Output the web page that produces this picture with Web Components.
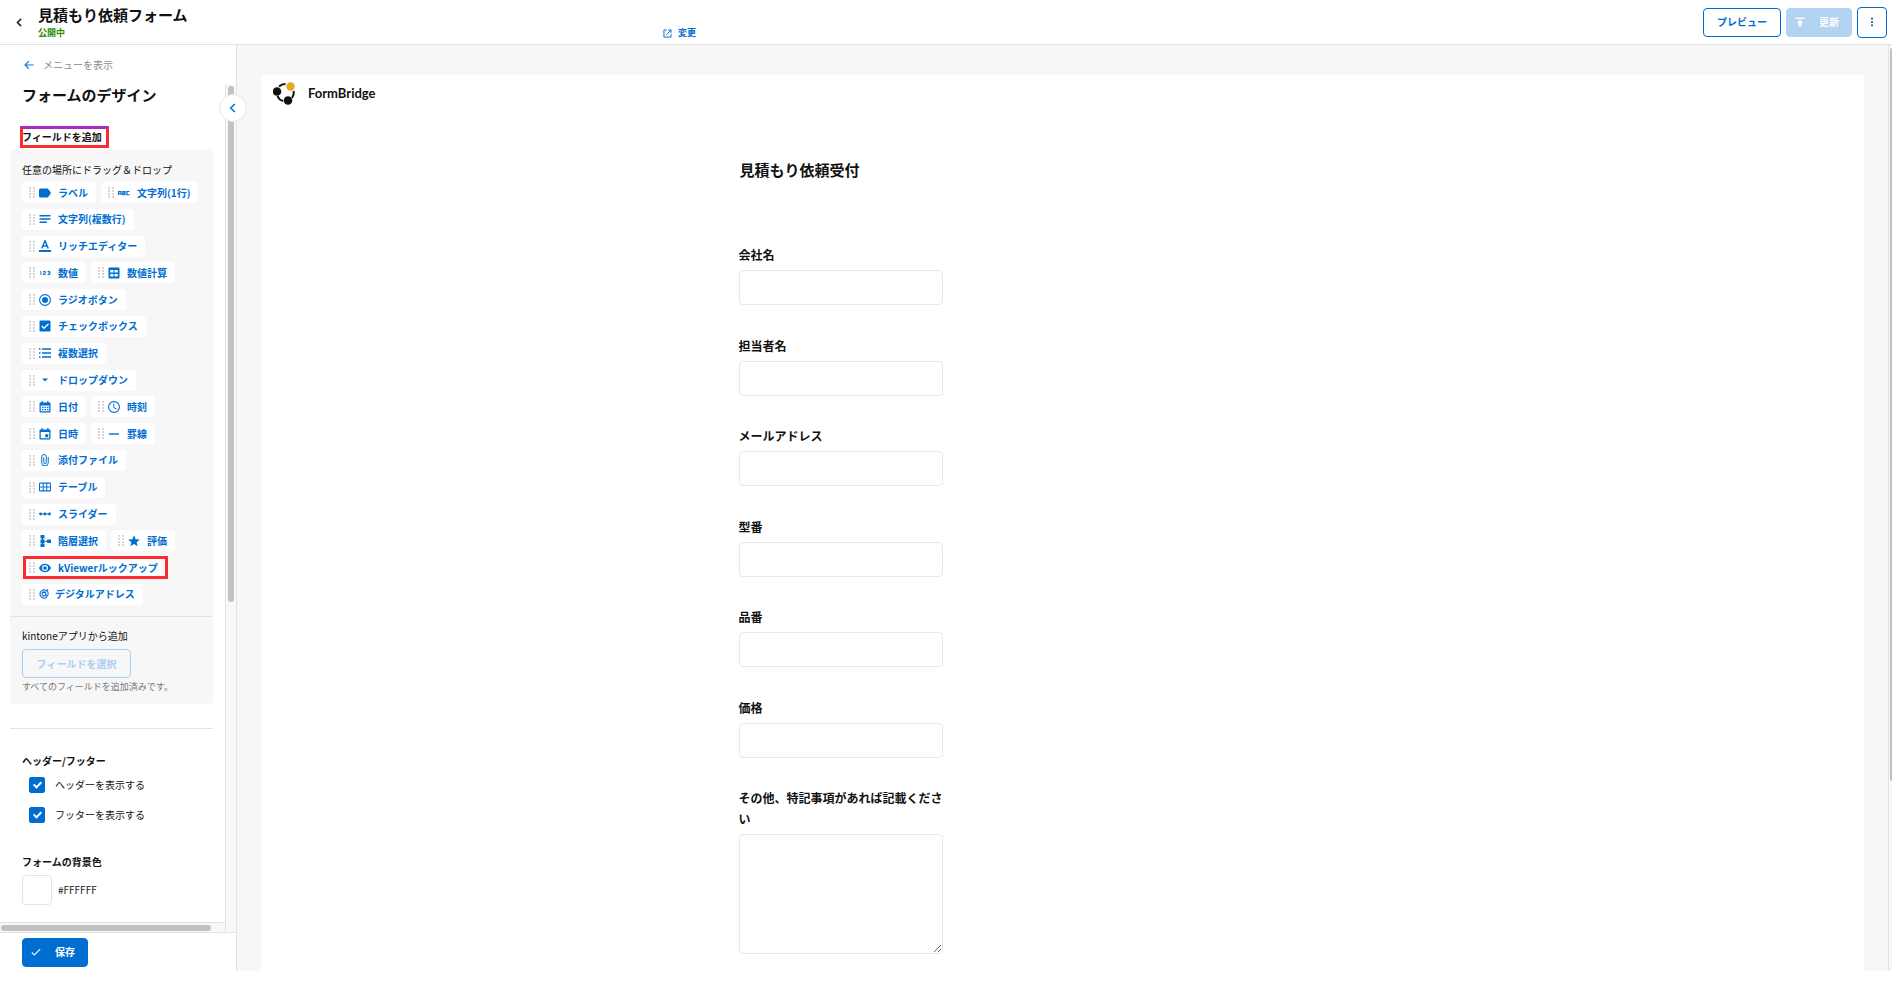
<!DOCTYPE html>
<html lang="ja">
<head>
<meta charset="utf-8">
<title>見積もり依頼フォーム</title>
<style>
  html, body { height: 100%; }
  body { margin: 0; background: #fff; color: #111; font-family: "Noto Sans CJK JP", sans-serif; font-size: 10px; line-height: 16px; }
</style>
</head>
<body>
<form-builder></form-builder>
<script>
const ICONS = {
  label: '<path fill="currentColor" d="M3 3h13c1 0 2 .4 2.500 1.200L24 12l-5.500 7.800C18 20.600 17 21 16 21H3c-1.600 0-3-1.300-3-3V6c0-1.700 1.400-3 3-3z"/>',
  abc: '<path fill="none" stroke="currentColor" stroke-width="2.400" d="M1 16V9h5v7M1 13h5M9.500 9H14v6.500H9.500zM9.500 12H14M23 9h-5v6.500h5"/>',
  lines: '<path fill="none" stroke="currentColor" stroke-width="3" d="M1 5.500h22M1 12h22M1 18.500h15"/>',
  rich: '<path fill="none" stroke="currentColor" stroke-width="2.800" d="M5.500 17L12 1.500 18.500 17M8 12h8"/><path fill="currentColor" d="M0 20h24v4H0z"/>',
  num: '<path fill="none" stroke="currentColor" stroke-width="1.800" d="M2 9.500h2V16M8 9h5v3H9v3.200h4.500M17 9h5v6h-5M18 12h4"/>',
  calc: '<path fill="currentColor" fill-rule="evenodd" d="M3 1h18a2 2 0 0 1 2 2v18a2 2 0 0 1-2 2H3a2 2 0 0 1-2-2V3a2 2 0 0 1 2-2zm1.500 5v5H11V6zM13 6v5h6.500V6zM4.500 14v5H11v-5zM13 14v5h6.500v-5z"/>',
  radio: '<circle cx="12" cy="12" r="10.800" fill="none" stroke="currentColor" stroke-width="2.200"/><circle cx="12" cy="12" r="6" fill="currentColor"/>',
  check: '<rect x="1" y="1" width="22" height="22" rx="2.500" fill="currentColor"/><path fill="none" stroke="#fff" stroke-width="2.600" d="M5.500 12l4.500 4.500 9-9"/>',
  list: '<path stroke="currentColor" stroke-width="2.600" d="M0 4h3M6 4h18M0 12h3M6 12h18M0 20h3M6 20h18"/>',
  caret: '<path fill="currentColor" d="M6 9h12l-6 6z"/>',
  date: '<path fill="currentColor" fill-rule="evenodd" d="M5 0h2.500v3h9V0H19v3h2a2 2 0 0 1 2 2v16a2 2 0 0 1-2 2H3a2 2 0 0 1-2-2V5a2 2 0 0 1 2-2h2zM3.500 9v11.500h17V9z"/><path stroke="currentColor" stroke-width="2.500" stroke-dasharray="3 2" d="M6 12.500h13M6 17h13"/>',
  clock: '<circle cx="12" cy="12" r="10.800" fill="none" stroke="currentColor" stroke-width="2.200"/><path fill="none" stroke="currentColor" stroke-width="2" d="M11.500 5.500V13l5.500 3"/>',
  datetime: '<path fill="currentColor" fill-rule="evenodd" d="M5 0h2.500v3h9V0H19v3h2a2 2 0 0 1 2 2v16a2 2 0 0 1-2 2H3a2 2 0 0 1-2-2V5a2 2 0 0 1 2-2h2zM3.500 8v12.500h17V8zM12.500 12.500h6v6h-6z"/>',
  rule: '<path stroke="currentColor" stroke-width="2.800" d="M2 12h20"/>',
  clip: '<path fill="none" stroke="currentColor" stroke-width="2" d="M18.500 6v11.500a6.500 6.500 0 0 1-13 0V5.500a4.500 4.500 0 0 1 9 0V17a2.500 2.500 0 0 1-5 0V7"/>',
  table: '<rect x="0" y="3" width="24" height="18" rx="2" fill="currentColor"/><path fill="#fff" d="M2 5.500h5.500v5.500H2zM9.500 5.500h5v5.500h-5zM16.500 5.500H22v5.500h-5.500zM2 13h5.500v5.500H2zM9.500 13h5v5.500h-5zM16.500 13H22v5.500h-5.500z"/>',
  slider: '<path stroke="currentColor" stroke-width="2" d="M2 12h20"/><g fill="currentColor"><circle cx="3" cy="12" r="2.800"/><circle cx="12" cy="12" r="2.800"/><circle cx="21" cy="12" r="2.800"/></g>',
  tree: '<path fill="currentColor" d="M3 0h8v7H3zM3 9h8v7H3zM3 17h8v7H3zM16 9h8v7h-8z"/><path stroke="currentColor" stroke-width="2" d="M7 2v20M8 12.500h10"/>',
  star: '<path fill="currentColor" d="M12 0.500l3.200 7.800 8.400.6-6.400 5.500 2 8.300L12 18.200l-7.200 4.500 2-8.300L.4 8.900l8.400-.6z"/>',
  eye: '<path fill="currentColor" fill-rule="evenodd" d="M12 3.500C6.500 3.500 2 7 0 12c2 5 6.500 8.500 12 8.500S22 17 24 12c-2-5-6.500-8.500-12-8.500zM12 18a6 6 0 1 1 0-12 6 6 0 0 1 0 12z"/><circle cx="12" cy="12" r="3.700" fill="currentColor"/>',
  at: '<g fill="none" stroke="currentColor" stroke-width="2.600"><path d="M19 19.500A10 10 0 1 1 21.500 8c1 5-.5 9-3 9s-2.500-3-2-6"/><circle cx="11.500" cy="12.500" r="4.500"/><path d="M8 7h9M19 1l3 3"/></g>',
  chevron: '<path fill="none" stroke="currentColor" stroke-width="3.400" d="M15.500 4l-8 8 8 8"/>',
  back: '<path fill="none" stroke="currentColor" stroke-width="2.800" d="M23 12H3M11.500 3L2.500 12l9 9"/>',
  open: '<path fill="none" stroke="currentColor" stroke-width="2.600" d="M10 2.500H2.500v19h19V14M14 2.500h7.500V10M21 3L9 15"/>',
  upload: '<path fill="currentColor" d="M1 2h22v2.500H1zM12 6l8 8h-4.500v8h-7v-8H4z"/>',
  dots: '<g fill="currentColor"><circle cx="12" cy="4" r="2.700"/><circle cx="12" cy="12" r="2.700"/><circle cx="12" cy="20" r="2.700"/></g>',
  tick: '<path fill="none" stroke="currentColor" stroke-width="2.600" d="M2 13l6 6L22 5"/>'
};

const BUTTON = `
  button { font: inherit; font-weight: 700; box-sizing: border-box; margin: 0; display: inline-flex; align-items: center; justify-content: center; border: 1px solid #006dd0; border-radius: 4px; background: #fff; color: #006dd0; height: 29px; padding: 0; }
`;

function define(name, render) {
  customElements.define(name, class extends HTMLElement {
    connectedCallback() {
      if (this.shadowRoot) return;
      this.attachShadow({ mode: 'open' }).innerHTML = render(this);
    }
  });
}

define('ui-icon', el => `
  <style>:host { display: block; flex: none; width: var(--size, 12px); height: var(--size, 12px); } svg { display: block; width: 100%; height: 100%; }</style>
  <svg viewBox="0 0 24 24" aria-hidden="true">${ICONS[el.getAttribute('name')]}</svg>`);

define('field-chip', el => `
  <style>
    :host { display: block; }
    button { font: inherit; font-weight: 700; position: relative; display: flex; align-items: center; height: 21px; margin: 0; padding: 0 8px 0 7px; border: 0; border-radius: 4px; background: #fff; color: #006dd0; cursor: grab; white-space: nowrap; }
    svg { width: 6px; height: 11px; margin-right: 4px; }
    ui-icon { margin-right: 7px; }
    :host([tight]) ui-icon { --size: 10px; margin-right: 6px; }
    :host([marked]) button::after { content: ""; position: absolute; inset: -1px -2px -1px 1px; border: 3px solid #fb2c30; }
  </style>
  <button type="button">
    <svg viewBox="0 0 6 11" fill="#c4c4c4" aria-hidden="true"><circle cx="1" cy="1" r="0.900"/><circle cx="5" cy="1" r="0.900"/><circle cx="1" cy="4" r="0.900"/><circle cx="5" cy="4" r="0.900"/><circle cx="1" cy="7" r="0.900"/><circle cx="5" cy="7" r="0.900"/><circle cx="1" cy="10" r="0.900"/><circle cx="5" cy="10" r="0.900"/></svg>
    <ui-icon name="${el.getAttribute('icon')}"></ui-icon><slot></slot>
  </button>`);

define('check-option', () => `
  <style>
    :host { display: block; }
    label { display: flex; align-items: center; gap: 10px; height: 30px; padding-left: 7px; color: #111; }
    input { appearance: none; width: 16px; height: 16px; margin: 0; border-radius: 2px; background: #fff; border: 1px solid #006dd0; display: grid; place-items: center; }
    input:checked { background: #006dd0; }
    input:checked::after { content: ""; width: 3px; height: 6px; border: solid #fff; border-width: 0 2px 2px 0; transform: translateY(-1px) rotate(45deg); }
  </style>
  <label><input type="checkbox" checked><span><slot></slot></span></label>`);

define('form-field', el => `
  <style>
    :host { display: block; width: 204px; }
    label { display: block; margin-bottom: 5px; font-size: 12px; font-weight: 700; line-height: 21px; }
    input, textarea { display: block; box-sizing: border-box; width: 100%; height: 35px; margin: 0; padding: 4px 8px; border: 1px solid #e8e8e8; border-radius: 4px; background: #fff; font: inherit; outline: 0; }
    textarea { height: 120px; resize: vertical; }
  </style>
  <label for="control"><slot></slot></label>
  ${el.hasAttribute('multiline') ? '<textarea id="control"></textarea>' : '<input id="control" type="text">'}`);

define('app-header', () => `
  <style>${BUTTON}
    :host { display: flex; align-items: center; box-sizing: border-box; height: 45px; padding-right: 5px; border-bottom: 1px solid #e3e3e3; background: #fff; }
    .back { width: 38px; height: 44px; border: 0; background: none; color: #222; }
    .back ui-icon { --size: 11px; }
    .titles { display: flex; flex-direction: column; width: 625px; }
    h1 { margin: 0; font-size: 15px; line-height: 21px; }
    .state { font-size: 9px; line-height: 16px; font-weight: 700; color: #2c8a00; }
    a { display: flex; align-items: center; gap: 6px; align-self: flex-end; margin-bottom: 4px; font-size: 9px; line-height: 14px; font-weight: 700; color: #006dd0; text-decoration: none; }
    a ui-icon { --size: 9px; }
    .actions { display: flex; align-items: center; gap: 5px; margin-left: auto; }
    .preview { width: 78px; }
    .update { width: 66px; gap: 14px; padding-right: 4px; border-color: #b2d3f1; background: #b2d3f1; color: #fff; }
    .update ui-icon { --size: 10px; }
    .more { width: 30px; height: 31px; }
    .more ui-icon { --size: 10px; }
  </style>
  <button class="back" type="button" aria-label="戻る"><ui-icon name="chevron"></ui-icon></button>
  <div class="titles"><h1>見積もり依頼フォーム</h1><span class="state">公開中</span></div>
  <a href="#"><ui-icon name="open"></ui-icon>変更</a>
  <div class="actions">
    <button class="preview" type="button">プレビュー</button>
    <button class="update" type="button" disabled><ui-icon name="upload"></ui-icon>更新</button>
    <button class="more" type="button" aria-label="その他"><ui-icon name="dots"></ui-icon></button>
  </div>`);

const ROWS = [
  [['label', 'ラベル'], ['abc', '文字列(1行)']],
  [['lines', '文字列(複数行)']],
  [['rich', 'リッチエディター']],
  [['num', '数値'], ['calc', '数値計算']],
  [['radio', 'ラジオボタン']],
  [['check', 'チェックボックス']],
  [['list', '複数選択']],
  [['caret', 'ドロップダウン']],
  [['date', '日付'], ['clock', '時刻']],
  [['datetime', '日時'], ['rule', '罫線']],
  [['clip', '添付ファイル']],
  [['table', 'テーブル']],
  [['slider', 'スライダー']],
  [['tree', '階層選択'], ['star', '評価']],
  [['eye', 'kViewerルックアップ', 'marked']],
  [['at', 'デジタルアドレス', 'tight']]
];

define('design-sidebar', () => `
  <style>${BUTTON}
    :host { position: relative; display: flex; flex-direction: column; box-sizing: border-box; width: 237px; border-right: 1px solid #e3e3e3; background: #fff; }
    .menu { display: flex; align-items: center; gap: 9px; height: 39px; padding-left: 24px; color: #8c8c8c; text-decoration: none; }
    .menu ui-icon { --size: 10px; color: #0a7be0; }
    .scroller { flex: 1; min-height: 0; display: grid; grid-template-columns: 1fr 11px; grid-template-rows: minmax(0, 1fr) 10px; }
    .content { overflow: hidden; padding: 0 12px 0 10px; }
    .vbar { grid-row: 1 / 3; grid-column: 2; border-left: 1px solid #e3e3e3; background: #f8f8f8; padding: 2px 2px 0; }
    .vbar i { display: block; height: 516px; border-radius: 3px; background: #c1c1c1; }
    .hbar { border-top: 1px solid #e3e3e3; background: #f8f8f8; padding: 2px 14px 0 1px; }
    .hbar i { display: block; height: 6px; border-radius: 3px; background: #c1c1c1; }
    h2 { margin: 0 0 0 12px; font-size: 15px; line-height: 22px; }
    h3 { margin: 0 0 0 12px; font-size: 10px; line-height: 16px; }
    .add { position: relative; width: max-content; margin-top: 23px; margin-bottom: 5px; }
    .add::after { content: ""; position: absolute; inset: -3px -7px -3px -2px; border: 3px solid #fb2c30; border-top-color: #a82bc8; }
    .panel { border-radius: 4px; background: #f7f7f7; }
    .panel section { padding: 12px 12px 11px; }
    .panel section + section { border-top: 1px solid #e3e3e3; padding: 11px 12px 9px; }
    p { margin: 0; color: #111; line-height: 16px; }
    .chips { display: flex; flex-direction: column; justify-content: space-between; height: 423px; margin-top: 4px; }
    .row { display: flex; gap: 5px; }
    .pick { display: flex; width: 109px; height: 29px; margin: 5px 0 1px; border-color: #a9d0f3; background: none; color: #a9d0f3; }
    .note { font-size: 9px; color: #777; }
    hr { margin: 24px 0; border: 0; border-top: 1px solid #e3e3e3; }
    .options { margin: 1px 12px 24px; }
    .color { display: flex; align-items: center; gap: 6px; margin: 5px 12px 0; color: #222; }
    .color button { width: 30px; height: 30px; border-color: #e3e3e3; }
    footer { display: flex; align-items: center; box-sizing: border-box; height: 39px; padding: 0 22px; border-top: 1px solid #e3e3e3; }
    .save { width: 66px; gap: 14px; padding-right: 4px; background: #006dd0; color: #fff; }
    .collapse { position: absolute; top: 49px; right: -11px; width: 28px; height: 28px; border: 1px solid #e8e8e8; border-radius: 50%; color: #0a7be0; }
    .save ui-icon { --size: 10px; }
  </style>
  <a class="menu" href="#"><ui-icon name="back"></ui-icon>メニューを表示</a>
  <div class="scroller">
    <div class="content">
      <h2>フォームのデザイン</h2>
      <h3 class="add">フィールドを追加</h3>
      <div class="panel">
        <section>
          <p>任意の場所にドラッグ＆ドロップ</p>
          <div class="chips">${ROWS.map(row => `<div class="row">${row.map(([icon, text, flag = '']) =>
            `<field-chip icon="${icon}" ${flag}>${text}</field-chip>`).join('')}</div>`).join('')}</div>
        </section>
        <section>
          <p>kintoneアプリから追加</p>
          <button class="pick" type="button" disabled>フィールドを選択</button>
          <p class="note">すべてのフィールドを追加済みです。</p>
        </section>
      </div>
      <hr>
      <h3>ヘッダー/フッター</h3>
      <div class="options">
        <check-option>ヘッダーを表示する</check-option>
        <check-option>フッターを表示する</check-option>
      </div>
      <h3>フォームの背景色</h3>
      <div class="color"><button type="button" aria-label="背景色"></button><span>#FFFFFF</span></div>
    </div>
    <div class="vbar"><i></i></div>
    <div class="hbar"><i></i></div>
  </div>
  <footer><button class="save" type="button"><ui-icon name="tick"></ui-icon>保存</button></footer>
  <button class="collapse" type="button" aria-label="閉じる"><ui-icon name="chevron"></ui-icon></button>`);

define('form-canvas', () => `
  <style>
    :host { display: grid; grid-template-columns: minmax(0, 1fr) 4px; background: #f7f7f7; }
    .stage { display: flex; padding: 30px 24px 0; }
    .page { flex: 1; min-width: 0; background: #fff; }
    .brand { display: flex; align-items: center; gap: 13px; padding: 7px 12px; font-family: Lato, sans-serif; font-size: 13px; font-weight: 700; line-height: 23px; }
    .brand svg { width: 22px; height: 23px; }
    form { max-width: 648px; margin: 0 auto; }
    h2 { margin: 47px 0 0 1px; font-size: 15px; line-height: 22px; }
    .fields { display: grid; grid-auto-rows: 1fr; height: 543px; margin-top: 63px; }
    .bar { border-left: 1px solid #e3e3e3; padding: 3px 0 0; }
    .bar i { display: block; height: 733px; margin-left: 1px; border-radius: 2px 0 0 2px; background: #c1c1c1; }
  </style>
  <div class="stage">
    <div class="page">
      <div class="brand">
        <svg viewBox="0 0 22 23" aria-hidden="true">
          <g fill="none" stroke="#111" stroke-width="2">
            <path d="M6 4.500Q8.500 2 12.500 2"/><path d="M20.500 9Q21.500 12 19 16"/><path d="M4.500 14Q6 18 10 19"/>
          </g>
          <circle cx="4" cy="9.500" r="4.300" fill="#111"/><circle cx="15" cy="18.500" r="4.300" fill="#111"/><circle cx="17.500" cy="4.500" r="4.200" fill="#e6a81e"/>
        </svg>
        <span>FormBridge</span>
      </div>
      <form>
        <h2>見積もり依頼受付</h2>
        <div class="fields">
          <form-field>会社名</form-field>
          <form-field>担当者名</form-field>
          <form-field>メールアドレス</form-field>
          <form-field>型番</form-field>
          <form-field>品番</form-field>
          <form-field>価格</form-field>
        </div>
        <form-field multiline>その他、特記事項があれば記載ください</form-field>
      </form>
    </div>
  </div>
  <div class="bar"><i></i></div>`);

define('form-builder', () => `
  <style>
    :host { display: grid; grid-template-rows: 45px minmax(0, 1fr); grid-template-columns: auto minmax(0, 1fr); box-sizing: border-box; height: 100%; min-height: 640px; padding-bottom: 14px; overflow: hidden; }
    app-header { grid-column: 1 / 3; }
    design-sidebar { z-index: 1; }
  </style>
  <app-header></app-header>
  <design-sidebar></design-sidebar>
  <form-canvas></form-canvas>`);
</script>
</body>
</html>
